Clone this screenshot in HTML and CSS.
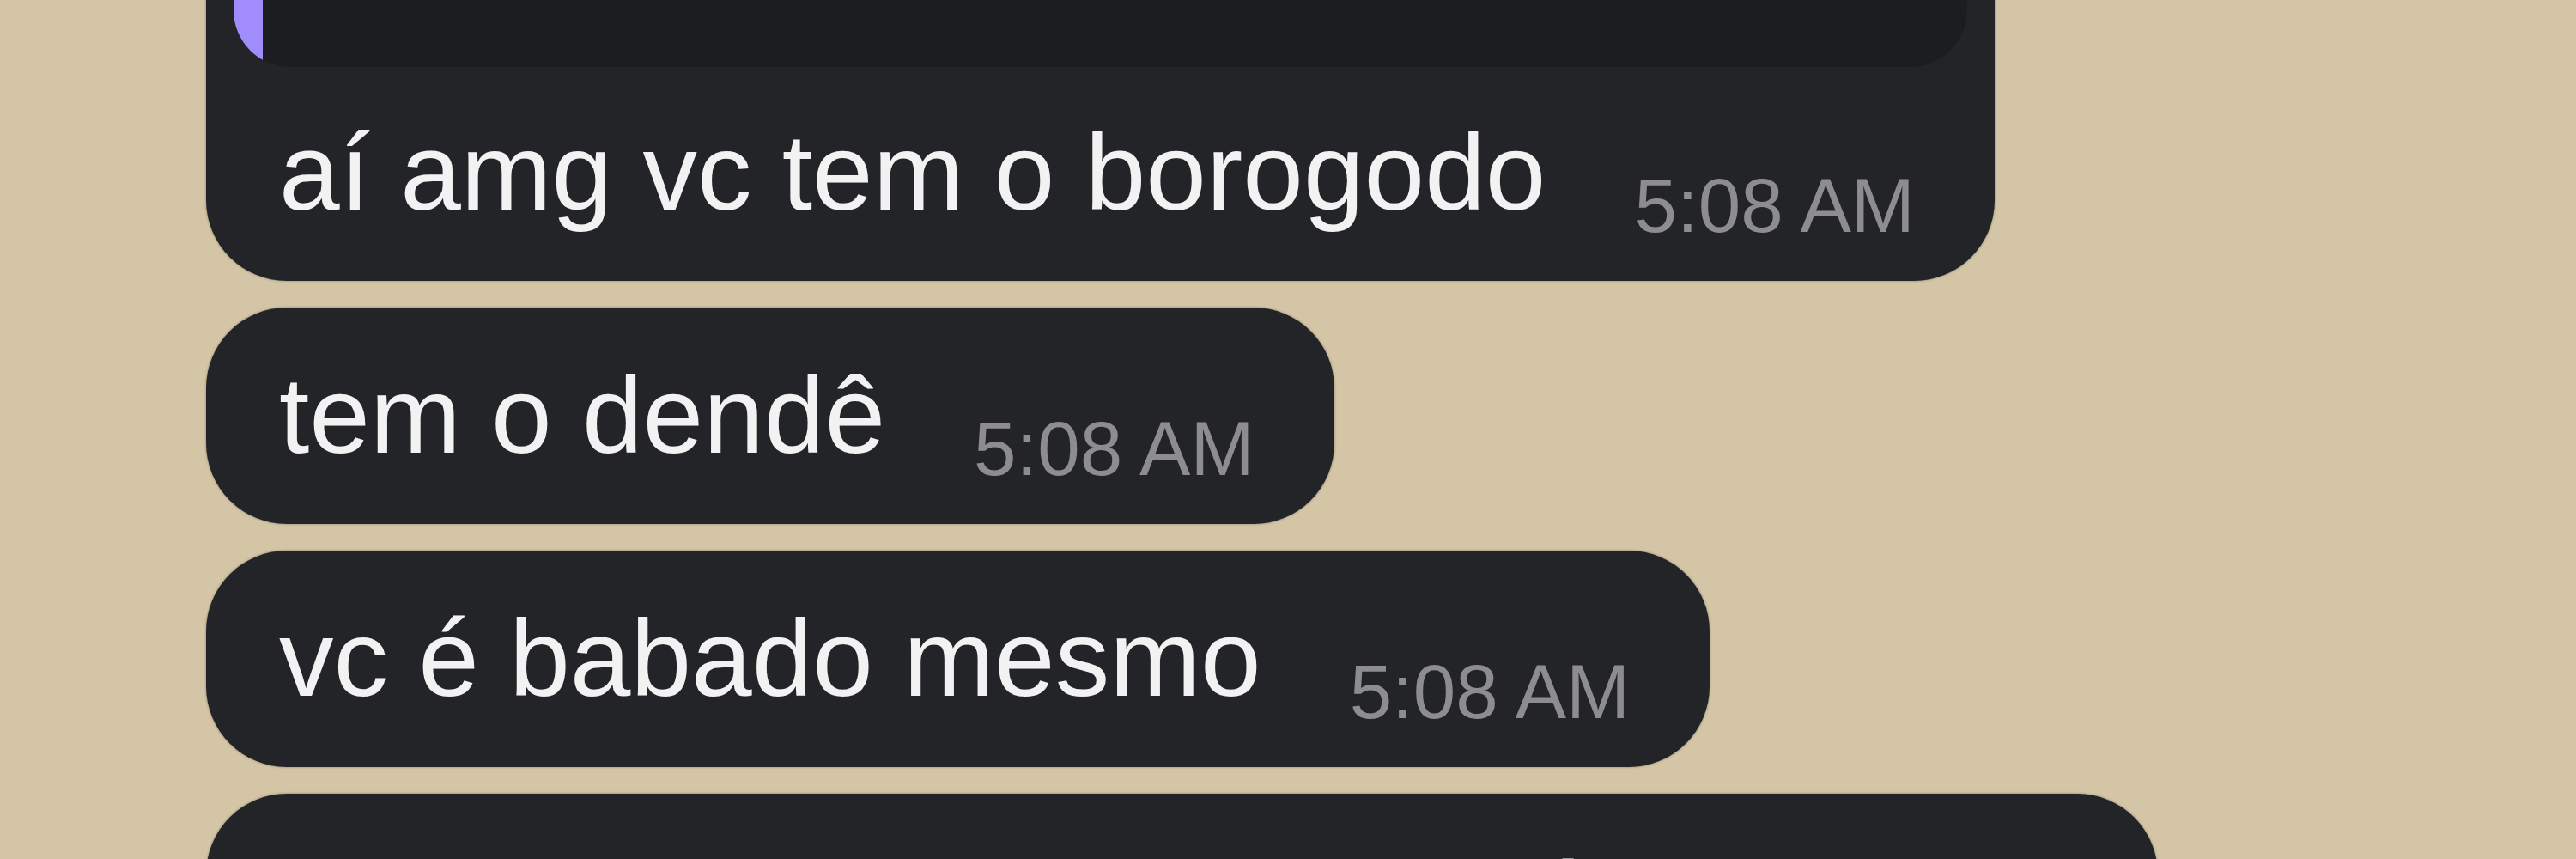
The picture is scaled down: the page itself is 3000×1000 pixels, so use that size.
FILE: index.html
```html
<!DOCTYPE html>
<html lang="pt">
<head>
    <meta charset="UTF-8">
    <meta name="viewport" content="width=device-width, initial-scale=1.0">
    <title>Chat</title>
    <link rel="stylesheet" href="styles.css">
</head>
<body>
    <div class="chat">
        <div class="bubble has-reply">
            <div class="reply"></div>
            <div class="msg-row">
                <span class="text">aí amg vc tem o borogodo</span>
                <span class="time">5:08 AM</span>
            </div>
        </div>

        <div class="bubble">
            <div class="msg-row">
                <span class="text">tem o dendê</span>
                <span class="time">5:08 AM</span>
            </div>
        </div>

        <div class="bubble">
            <div class="msg-row">
                <span class="text">vc é babado mesmo</span>
                <span class="time">5:08 AM</span>
            </div>
        </div>

        <div class="bubble">
            <div class="msg-row">
                <span class="text">kkkkkkkkkkkk tô falando sério</span>
                <span class="time">5:08 AM</span>
            </div>
        </div>
    </div>
</body>
</html>
```

FILE: styles.css
```css
body {
    margin: 0;
    background: #d3c5a5;
    font-family: "Liberation Sans", Arial, sans-serif;
    overflow: hidden;
}
.chat {
    display: flex;
    flex-direction: column;
    align-items: flex-start;
    gap: 31px;
    padding-left: 240px;
    margin-top: -262px;
}
.bubble {
    background: #232427;
    border-radius: 94px;
    padding: 41px 93px 43px 85px;
    box-shadow: 0 0 3px rgba(0,0,0,0.35);
}
.bubble.has-reply {
    padding-top: 32px;
}
.reply {
    height: 308px;
    margin: 0 -61px 38px -53px;
    border-radius: 66px;
    background: linear-gradient(to right, #a08cfa 34px, #1c1d1e 34px);
}
.msg-row {
    display: flex;
    align-items: flex-end;
}
.text {
    font-size: 127px;
    line-height: 168px;
    color: #f2f2f2;
    white-space: nowrap;
}
.time {
    font-size: 89px;
    line-height: 89px;
    margin-left: 103px;
    color: #8d8d91;
    white-space: nowrap;
}
```
